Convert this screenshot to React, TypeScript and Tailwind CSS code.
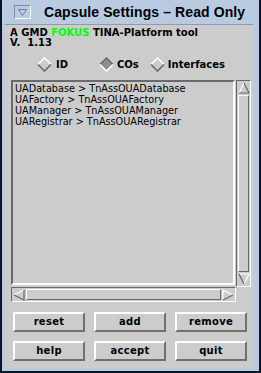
import React from "react";

const rows = [
  "UADatabase > TnAssOUADatabase",
  "UAFactory > TnAssOUAFactory",
  "UAManager > TnAssOUAManager",
  "UARegistrar > TnAssOUARegistrar",
];

function Diamond({ on }: { on?: boolean }) {
  const hi = on ? "#6a6a6a" : "#ffffff";
  const lo = on ? "#ffffff" : "#6a6a6a";
  return (
    <svg width="15" height="15" viewBox="0 0 15 15">
      {on && <polygon points="7.5,1 14,7.5 7.5,14 1,7.5" fill="#8e8e8e" />}
      <polyline points="1,7.5 7.5,1 14,7.5" fill="none" stroke={hi} strokeWidth="1.6" />
      <polyline points="1,7.5 7.5,14 14,7.5" fill="none" stroke={lo} strokeWidth="1.6" />
    </svg>
  );
}

function Arrow({ dir }: { dir: "up" | "down" | "left" | "right" }) {
  const pts = {
    up: { a: "1,11 6,1", b: "6,1 11,11 1,11" },
    down: { a: "1,1 11,1 6,11", b: "6,11 1,1" },
    left: { a: "11,1 1,6", b: "1,6 11,11 11,1" },
    right: { a: "1,11 1,1 11,6", b: "11,6 1,11" },
  }[dir];
  return (
    <svg width="12" height="12" viewBox="0 0 12 12" className="shrink-0">
      <polyline points={pts.a} fill="none" stroke="#ffffff" strokeWidth="1.2" />
      <polyline points={pts.b} fill="none" stroke="#6a6a6a" strokeWidth="1.2" />
    </svg>
  );
}

function Btn({ label }: { label: string }) {
  return (
    <button className="w-[72px] h-[20px] bg-[#cccccc] border-2 border-t-white border-l-white border-b-[#707070] border-r-[#707070] text-[10px] font-bold text-black leading-none tracking-[0.3px]">
      {label}
    </button>
  );
}

export default function App() {
  return (
    <div className="w-[261px] h-[373px] bg-[#b9cbe1] border-l-2 border-r-2 border-b-2 border-[#0d1326] pl-[3px] pr-[6px] pb-[3px] flex flex-col font-['DejaVu_Sans',sans-serif] text-black">
      {/* title bar */}
      <div className="h-[25px] flex items-center border-b border-[#8d9bb0]">
        <div className="ml-[9px] w-[17px] h-[14px] border border-t-[#7d8ca3] border-l-[#7d8ca3] border-b-white border-r-white flex items-center justify-center">
          <svg width="9" height="7" viewBox="0 0 9 7">
            <polygon points="0.5,0.5 8.5,0.5 4.5,6.5" fill="none" stroke="#6f7f96" strokeWidth="1" />
          </svg>
        </div>
        <span className="ml-[13px] font-['Liberation_Sans',sans-serif] font-bold text-[14px] leading-none tracking-[0.1px]">
          Capsule Settings – Read Only
        </span>
      </div>

      {/* body */}
      <div className="flex-1 bg-[#cccccc] flex flex-col">
        <div className="pl-[5px] pt-[3px] text-[10px] font-bold leading-[10px] whitespace-pre">
          <div>
            A GMD <span className="text-[#00ff00]">FOKUS</span> TINA-Platform tool
          </div>
          <div>V.  1.13</div>
        </div>

        <div className="mt-[8px] h-[16px] flex items-center text-[10px] font-bold">
          <div className="ml-[32px] flex items-center gap-[4px]">
            <Diamond />
            <span>ID</span>
          </div>
          <div className="ml-[31px] flex items-center gap-[3px]">
            <Diamond on />
            <span>COs</span>
          </div>
          <div className="ml-[11px] flex items-center gap-[3px]">
            <Diamond />
            <span>Interfaces</span>
          </div>
        </div>

        <div className="ml-[6px] mt-[8px] flex items-start">
          <div className="w-[224px] h-[205px] border-2 border-t-[#6a6a6a] border-l-[#6a6a6a] border-b-white border-r-white pl-[2px] pt-[1px] text-[9.7px] leading-[11px]">
            {rows.map((r) => (
              <div key={r}>{r}</div>
            ))}
          </div>
          <div className="ml-[1px] w-[15px] h-[207px] border border-t-[#6a6a6a] border-l-[#6a6a6a] border-b-white border-r-white flex flex-col items-center py-[1px]">
            <Arrow dir="up" />
            <div className="flex-1 w-[11px] my-[1px] border border-t-white border-l-white border-b-[#6a6a6a] border-r-[#6a6a6a]" />
            <Arrow dir="down" />
          </div>
        </div>

        <div className="ml-[6px] w-[225px] h-[15px] border border-t-[#6a6a6a] border-l-[#6a6a6a] border-b-white border-r-white flex items-center px-[1px]">
          <Arrow dir="left" />
          <div className="flex-1 h-[11px] mx-[1px] border border-t-white border-l-white border-b-[#6a6a6a] border-r-[#6a6a6a]" />
          <Arrow dir="right" />
        </div>

        <div className="ml-[8px] mt-[10px] grid grid-cols-[72px_72px_72px] gap-x-[9px] gap-y-[9px]">
          <Btn label="reset" />
          <Btn label="add" />
          <Btn label="remove" />
          <Btn label="help" />
          <Btn label="accept" />
          <Btn label="quit" />
        </div>
      </div>
    </div>
  );
}
